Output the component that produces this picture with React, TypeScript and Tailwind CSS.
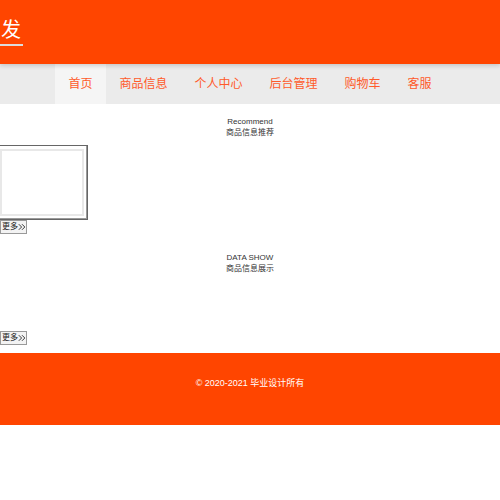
import React from 'react';

const navItems = ['首页', '商品信息', '个人中心', '后台管理', '购物车', '客服'];

const SectionTitle: React.FC<{ en: string; cn: string }> = ({ en, cn }) => (
  <div className="text-center text-[8px] leading-[11px] text-[#333]">
    <div>{en}</div>
    <div>{cn}</div>
  </div>
);

const MoreButton: React.FC = () => (
  <button className="flex h-[14px] w-[27px] items-center whitespace-nowrap border border-[#999] bg-[#f3f3f3] pl-[1px] text-[8px] leading-none text-[#222]">
    更多
    <svg width="10" height="10" viewBox="0 0 10 10" fill="none" stroke="#222" strokeWidth="1.1">
      <path d="M1 1.5 L4.5 5 L1 8.5" />
      <path d="M5 1.5 L8.5 5 L5 8.5" />
    </svg>
  </button>
);

const App: React.FC = () => {
  return (
    <div
      className="w-[500px] overflow-hidden bg-white min-h-[500px]"
      style={{ fontFamily: '"Liberation Sans", "Noto Sans CJK SC", sans-serif' }}
    >
      {/* Header */}
      <header className="relative z-10 h-[64px] bg-[#ff4500] pt-[17px] shadow-[0_2px_4px_rgba(0,0,0,0.15)]">
        <span className="inline-block border-b-2 border-[#dcdcdc] pl-[1px] pr-[2px] text-[20px] leading-[27px] text-white">
          发
        </span>
      </header>

      {/* Navigation */}
      <nav className="flex h-[40px] bg-[#ebebeb] pl-[55px]">
        {navItems.map((item, i) => (
          <div
            key={item}
            className={`px-[13.5px] text-[12px] leading-[40px] text-[#ff5a2a] ${i === 0 ? 'bg-[#f5f5f5]' : ''}`}
          >
            {item}
          </div>
        ))}
      </nav>

      {/* Recommend */}
      <section className="pt-[12px]">
        <SectionTitle en="Recommend" cn="商品信息推荐" />
        <div className="mt-[7px] -ml-[4px] h-[75px] w-[92px] border border-[#666] p-[3px] shadow-[inset_-1px_-1px_0_#999]">
          <div className="h-full w-full border-2 border-[#e8e8e8]" />
        </div>
        <MoreButton />
      </section>

      {/* Data show */}
      <section className="pt-[18px]">
        <SectionTitle en="DATA SHOW" cn="商品信息展示" />
        <div className="h-[57px]" />
        <MoreButton />
      </section>

      {/* Footer */}
      <footer className="mt-[8px] h-[72px] bg-[#ff4500] pt-[24px] text-center text-[9px] leading-[12px] text-white">
        © 2020-2021 毕业设计所有
      </footer>
    </div>
  );
};

export default App;
